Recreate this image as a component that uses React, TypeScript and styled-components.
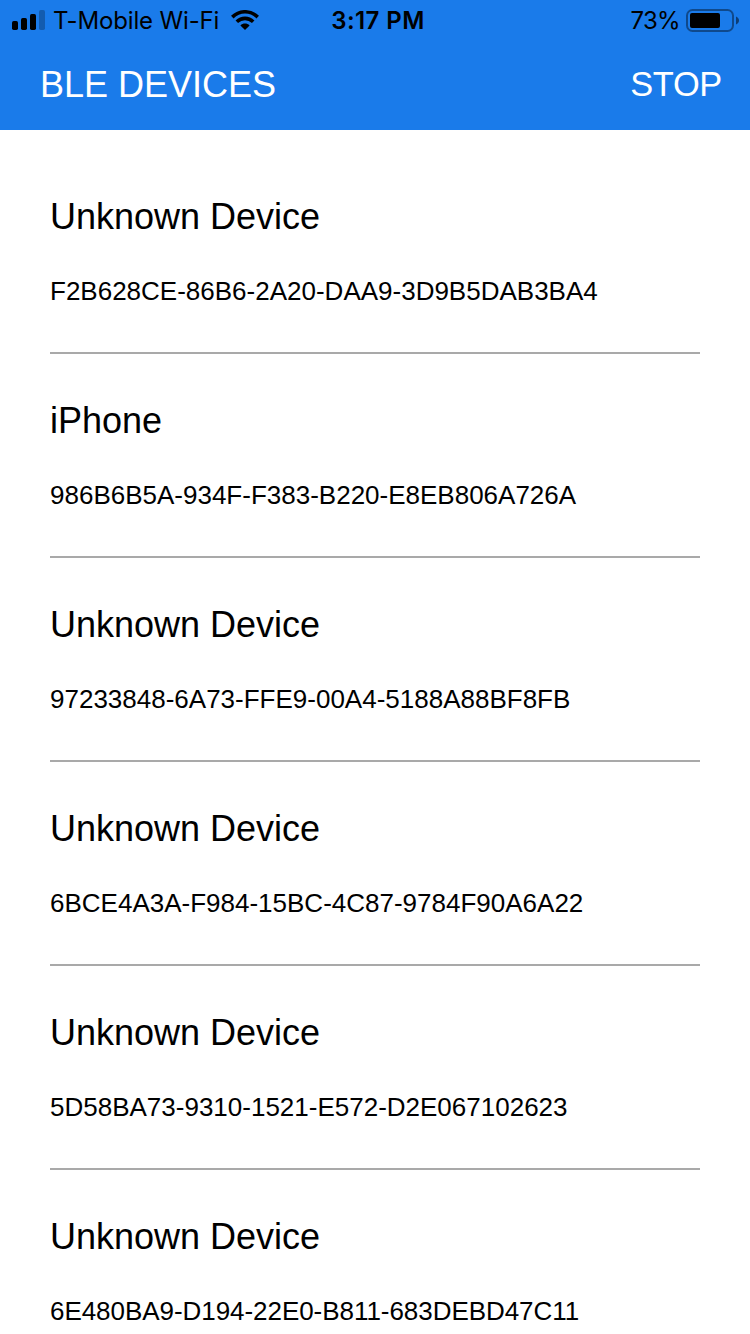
import React from "react";
import styled, { createGlobalStyle } from "styled-components";

const GlobalStyle = createGlobalStyle`
  html, body { margin: 0; padding: 0; background: #fff; }
  body { height: 1334px; overflow: hidden; }
  * { box-sizing: border-box; }
`;

const Screen = styled.div`
  width: 750px;
  height: 1334px;
  overflow: hidden;
  background: #fff;
  color: #000;
  font-family: "Liberation Sans", Helvetica, Arial, sans-serif;
`;

const Header = styled.header`
  height: 130px;
  background: #1a7bea;
`;

const StatusBar = styled.div`
  display: grid;
  grid-template-columns: 1fr auto 1fr;
  align-items: center;
  height: 40px;
  padding: 0 10px 0 12px;
  font-family: Inter, sans-serif;
  font-size: 24px;
  line-height: 40px;
  white-space: nowrap;
`;

const StatusGroup = styled.div<{ $end?: boolean }>`
  display: flex;
  align-items: center;
  justify-content: ${(p) => (p.$end ? "flex-end" : "flex-start")};
  height: 40px;
`;

const StatusText = styled.span`
  height: 40px;
  padding-top: 1px;
`;

const Carrier = styled(StatusText)`
  width: 166px;
  margin: 0 12px 0 8px;
  letter-spacing: -0.15px;
`;

const Clock = styled(StatusText)`
  padding-left: 4px;
  font-weight: 600;
  letter-spacing: 0.4px;
`;

const Percent = styled(StatusText)`
  margin-right: 6px;
  letter-spacing: -0.7px;
`;

const Toolbar = styled.div`
  display: flex;
  justify-content: space-between;
  align-items: flex-start;
  height: 90px;
  padding: 24px 28px 0 40px;
  color: #fff;
`;

const Title = styled.h1`
  margin: 0;
  font-size: 36px;
  font-weight: 400;
  line-height: 42px;
`;

const ScanButton = styled.button`
  height: 40px;
  margin: 0;
  padding: 0;
  border: 0;
  background: none;
  color: inherit;
  font-family: inherit;
  font-size: 34.4px;
  letter-spacing: -0.3px;
  line-height: 40px;
`;

const DeviceList = styled.ul`
  margin: 0;
  padding: 20px 50px 0;
  list-style: none;
`;

const DeviceRow = styled.li`
  height: 204px;
  padding-top: 46px;
  border-bottom: 2px solid #a9a9a9;
`;

const DeviceName = styled.div`
  font-size: 36px;
  line-height: 42px;
`;

const DeviceId = styled.div<{ $tracking?: number }>`
  margin-top: 38px;
  font-size: 26px;
  line-height: 30px;
  letter-spacing: ${(p) => p.$tracking ?? 0}px;
`;

const devices = [
  { name: "Unknown Device", id: "F2B628CE-86B6-2A20-DAA9-3D9B5DAB3BA4" },
  { name: "iPhone", id: "986B6B5A-934F-F383-B220-E8EB806A726A" },
  { name: "Unknown Device", id: "97233848-6A73-FFE9-00A4-5188A88BF8FB" },
  { name: "Unknown Device", id: "6BCE4A3A-F984-15BC-4C87-9784F90A6A22" },
  { name: "Unknown Device", id: "5D58BA73-9310-1521-E572-D2E067102623" },
  { name: "Unknown Device", id: "6E480BA9-D194-22E0-B811-683DEBD47C11", tracking: -0.05 },
];

const SignalIcon = () => (
  <svg width="33" height="20" viewBox="0 0 33 20">
    <rect x="0" y="11" width="6" height="9" rx="1.7" />
    <rect x="9" y="8" width="6" height="12" rx="1.7" />
    <rect x="18" y="4" width="6" height="16" rx="1.7" />
    <rect x="27" y="0" width="6" height="20" rx="1.7" opacity="0.25" />
  </svg>
);

const WifiIcon = () => (
  <svg width="28" height="20" viewBox="0 0 28 20">
    <g fill="none" stroke="#000" strokeWidth="3.6">
      <path d="M1.3 7.1C8.5 0 19.5 0 26.7 7.1" />
      <path d="M5.8 11.7C10.5 7.2 17.5 7.2 22.2 11.7" />
    </g>
    <path d="M9.4 15.4C12 12.9 16 12.9 18.6 15.4L14 20Z" />
  </svg>
);

const BatteryIcon = () => (
  <svg width="54" height="22" viewBox="0 0 54 22" overflow="visible">
    <rect x="1" y="1" width="46" height="21" rx="5.5" fill="none" stroke="#000" strokeOpacity="0.4" strokeWidth="2" />
    <rect x="4" y="4" width="30" height="15" rx="2" />
    <path d="M50 7.5C54 9 54 14 50 15.5Z" fillOpacity="0.5" />
  </svg>
);

export default function App() {
  return (
    <Screen>
      <GlobalStyle />
      <Header>
        <StatusBar>
          <StatusGroup>
            <SignalIcon />
            <Carrier>T-Mobile Wi-Fi</Carrier>
            <WifiIcon />
          </StatusGroup>
          <Clock>3:17 PM</Clock>
          <StatusGroup $end>
            <Percent>73%</Percent>
            <BatteryIcon />
          </StatusGroup>
        </StatusBar>
        <Toolbar>
          <Title>BLE DEVICES</Title>
          <ScanButton>STOP</ScanButton>
        </Toolbar>
      </Header>
      <DeviceList>
        {devices.map((d) => (
          <DeviceRow key={d.id}>
            <DeviceName>{d.name}</DeviceName>
            <DeviceId $tracking={d.tracking}>{d.id}</DeviceId>
          </DeviceRow>
        ))}
      </DeviceList>
    </Screen>
  );
}
